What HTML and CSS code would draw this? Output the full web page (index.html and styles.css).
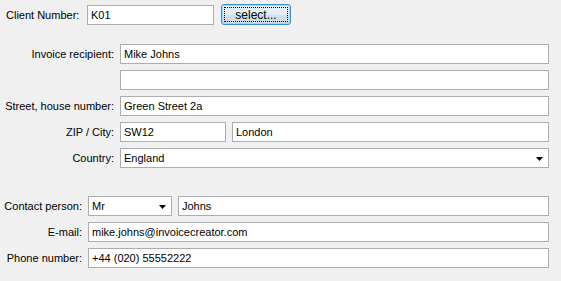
FILE: index.html
```html
<!DOCTYPE html>
<html>
  <head>
    <meta charset="UTF-8" />
    <title>Client</title>
    <link rel="stylesheet" href="styles.css">
  </head>
  <body>
    <div class="client-row">
      <label class="label">Client Number:</label>
      <div class="field client-field">K01</div>
      <button class="select-btn">select...</button>
    </div>

    <div class="form address">
      <label class="label">Invoice recipient:</label>
      <div class="field">Mike Johns</div>

      <span class="label"></span>
      <div class="field"></div>

      <label class="label">Street, house number:</label>
      <div class="field">Green Street 2a</div>

      <label class="label">ZIP / City:</label>
      <div class="pair">
        <div class="field zip">SW12</div>
        <div class="field grow">London</div>
      </div>

      <label class="label">Country:</label>
      <div class="field combo">
        <span>England</span>
        <svg class="arrow" viewBox="0 0 7 4"><path d="M0 0h7L3.5 4z"></path></svg>
      </div>
    </div>

    <div class="form contact">
      <label class="label">Contact person:</label>
      <div class="pair">
        <div class="field combo salutation">
          <span>Mr</span>
          <svg class="arrow" viewBox="0 0 7 4"><path d="M0 0h7L3.5 4z"></path></svg>
        </div>
        <div class="field grow">Johns</div>
      </div>

      <label class="label">E-mail:</label>
      <div class="field">mike.johns@invoicecreator.com</div>

      <label class="label">Phone number:</label>
      <div class="field">+44 (020) 55552222</div>
    </div>
  </body>
</html>
```

FILE: styles.css
```css
:root {
  --canvas: #f0f0f0;
  --border: #abadb3;
}

body {
  font-family: "Liberation Sans", Arial, sans-serif;
  font-size: 11px;
  color: #000;
  background: var(--canvas);
  margin: 0;
  padding: 4px 12px 0 6px;
}

.client-row {
  display: flex;
  align-items: center;
  height: 21px;
}

.client-row .label {
  width: 81px;
}

.client-field {
  width: 127px;
  height: 20px;
}

.select-btn {
  font: inherit;
  font-size: 12px;
  margin-left: 7px;
  width: 70px;
  height: 21px;
  padding: 0;
  border: 1px solid #3c8fc8;
  border-radius: 3px;
  background: linear-gradient(#e9f3f9 0%, #e1ecf3 50%, #d2e1ea 51%, #c9dae5 100%);
  box-shadow: inset 0 0 0 1px #a6d6f4;
  position: relative;
  color: #000;
}

.select-btn::after {
  content: "";
  position: absolute;
  inset: 2px;
  border: 1px dotted #000;
}

.form {
  display: grid;
  grid-template-columns: 108px 1fr;
  column-gap: 6px;
  row-gap: 6px;
  grid-auto-rows: 20px;
}

.address {
  margin-top: 19px;
}

.contact {
  margin-top: 28px;
  grid-template-columns: 76px 1fr;
}

.label {
  display: flex;
  align-items: center;
  justify-content: flex-end;
  white-space: nowrap;
}

.client-row .label {
  justify-content: flex-start;
}

.field {
  box-sizing: border-box;
  height: 20px;
  background: #fff;
  border: 1px solid var(--border);
  padding: 0 3px;
  display: flex;
  align-items: center;
  white-space: nowrap;
}

.pair {
  display: flex;
  gap: 6px;
}

.zip {
  width: 106px;
}

.grow {
  flex: 1;
}

.combo {
  justify-content: space-between;
  padding-right: 5px;
}

.salutation {
  width: 84px;
}

.arrow {
  width: 7px;
  height: 4px;
  fill: #000;
  margin-top: 1px;
}
```
